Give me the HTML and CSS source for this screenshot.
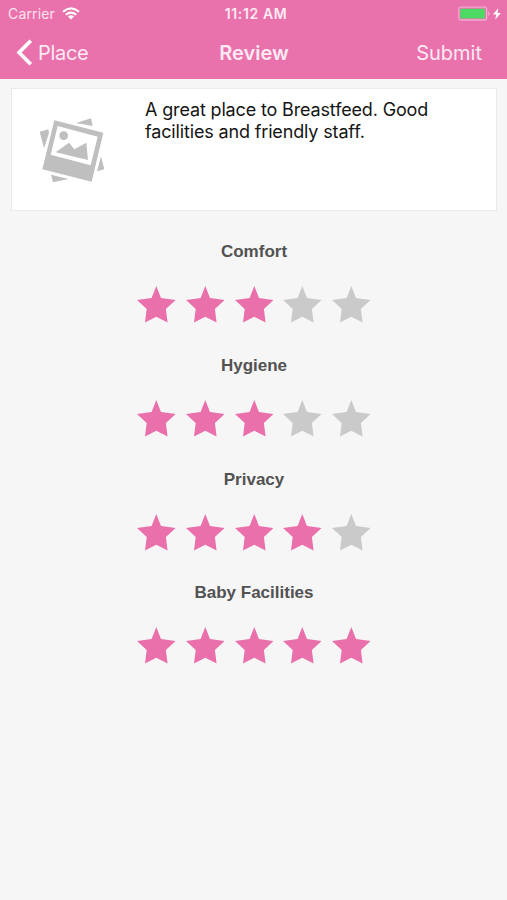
FILE: index.html
```html
<!DOCTYPE html>
<html lang="en">
<head>
<meta charset="utf-8">
<title>Review</title>
<link rel="stylesheet" href="styles.css">
</head>
<body>
<svg class="defs" aria-hidden="true"><symbol id="star" viewBox="0 0 38.6 37"><path d="M19.3 0L24 12L38.6 14L28.9 23L30.6 36.6L19.3 30.7L8 36.6L9.7 23L0 14L14.6 12Z"/></symbol></svg>
<header>
  <div class="status">
    <div class="carrier"><span>Carrier</span>
      <svg class="wifi" viewBox="0 0 18 13"><g fill="none" stroke="#fff" stroke-width="2.1"><path d="M1 4.7Q9-2.1 17 4.7"/><path d="M3.8 7.8Q9 3.4 14.2 7.8"/></g><path fill="#fff" d="M5.9 9.5Q9 7 12.1 9.5L9 12.6Z"/></svg>
    </div>
    <span class="time">11:12 AM</span>
    <svg class="battery" viewBox="0 0 44 16"><rect x=".8" y="1.2" width="27.8" height="12.8" rx="2" fill="none" stroke="#f4a9cf" stroke-width="1.3"/><rect x="2.2" y="2.8" width="24.8" height="9.8" rx=".6" fill="#4cd964"/><path d="M30.5 5.5Q32.5 7.8 30.5 10Z" fill="#f9cde2"/><path d="M40.3 2L35 8.6H38.3L37.2 13.8L42.8 6.9H39.4Z" fill="#fff"/></svg>
  </div>
  <nav>
    <a class="back"><svg viewBox="0 0 17 27"><path d="M14.8 1.8L3.1 13.5L14.8 25.2" fill="none" stroke="#fff" stroke-width="3.7"/></svg><span>Place</span></a>
    <h1>Review</h1>
    <a class="submit">Submit</a>
  </nav>
</header>
<main>
  <section class="card">
    <svg class="photo" viewBox="115 110 201 201"><g fill="#bfbfbf"><path d="M226 128L271 114L276 137Z"/><path d="M117 154L143 147L145 158L130 204Z"/><path d="M301 228L311 267L289 273Z"/><path d="M151 283L204 296L157 306Z"/><path fill-rule="evenodd" d="M161 120L308 157L273 304L125 267ZM171 137L150 223L270 255L291 169Z"/><circle cx="189" cy="166" r="13"/><path d="M165 216L205 187L221 207L257 187L262 239Z"/></g></svg>
    <p>A great place to Breastfeed. Good<br>facilities and friendly staff.</p>
  </section>
  <section class="ratings">
    <div class="rating"><h2>Comfort</h2><div class="stars"><svg><use href="#star"/></svg><svg><use href="#star"/></svg><svg><use href="#star"/></svg><svg class="off"><use href="#star"/></svg><svg class="off"><use href="#star"/></svg></div></div>
    <div class="rating"><h2>Hygiene</h2><div class="stars"><svg><use href="#star"/></svg><svg><use href="#star"/></svg><svg><use href="#star"/></svg><svg class="off"><use href="#star"/></svg><svg class="off"><use href="#star"/></svg></div></div>
    <div class="rating"><h2>Privacy</h2><div class="stars"><svg><use href="#star"/></svg><svg><use href="#star"/></svg><svg><use href="#star"/></svg><svg><use href="#star"/></svg><svg class="off"><use href="#star"/></svg></div></div>
    <div class="rating"><h2>Baby Facilities</h2><div class="stars"><svg><use href="#star"/></svg><svg><use href="#star"/></svg><svg><use href="#star"/></svg><svg><use href="#star"/></svg><svg><use href="#star"/></svg></div></div>
  </section>
</main>
</body>
</html>
```
FILE: styles.css
```css
* { box-sizing: border-box; margin: 0; padding: 0; }
body { height: 900px; background: #f6f6f6; font-family: Inter, "Liberation Sans", sans-serif; overflow: hidden; }
svg { display: block; flex: none; }
.defs { width: 0; height: 0; position: absolute; }
header { height: 79px; background: #ea72ac; color: #fff; }
.status { height: 27px; display: grid; grid-template-columns: 1fr auto 1fr; align-items: center; padding: 0 5px 0 8px; }
.carrier { display: flex; align-items: center; gap: 7px; font-size: 14px; letter-spacing: .15px; color: #fde3ef; }
.wifi { width: 18px; height: 13px; }
.time { font-size: 14px; font-weight: 600; letter-spacing: .6px; color: #fdeaf3; padding-left: 2px; }
.battery { width: 44px; height: 16px; justify-self: end; }
nav { height: 51px; display: grid; grid-template-columns: 1fr auto 1fr; align-items: center; padding: 0 25px 0 16px; color: #fdeaf3; }
.back { display: flex; align-items: center; gap: 5px; font-size: 20px; letter-spacing: -.3px; }
.back svg { width: 17px; height: 27px; }
h1 { font-size: 20px; font-weight: 600; padding-left: 10px; }
.submit { justify-self: end; font-size: 20px; }
main { padding: 9px 10px 0 11px; }
.card { height: 123px; background: #fff; border: 1px solid #e9ebeb; display: flex; padding: 10px 0 0 27px; }
.photo { width: 67px; height: 67px; margin-top: 18px; }
.card p { margin-left: 39px; font-size: 18px; line-height: 22px; letter-spacing: -.15px; color: #151515; white-space: nowrap; }
.ratings { padding-top: 30px; display: grid; grid-auto-rows: 113.8px; }
.rating { display: flex; flex-direction: column; align-items: center; }
h2 { font: bold 17px/22px "Liberation Sans", sans-serif; color: #525252; }
.stars { display: flex; gap: 10.2px; margin-top: 23px; }
.stars svg { width: 38.6px; height: 37px; fill: #e970ab; }
.stars .off { fill: #cacaca; }
```
